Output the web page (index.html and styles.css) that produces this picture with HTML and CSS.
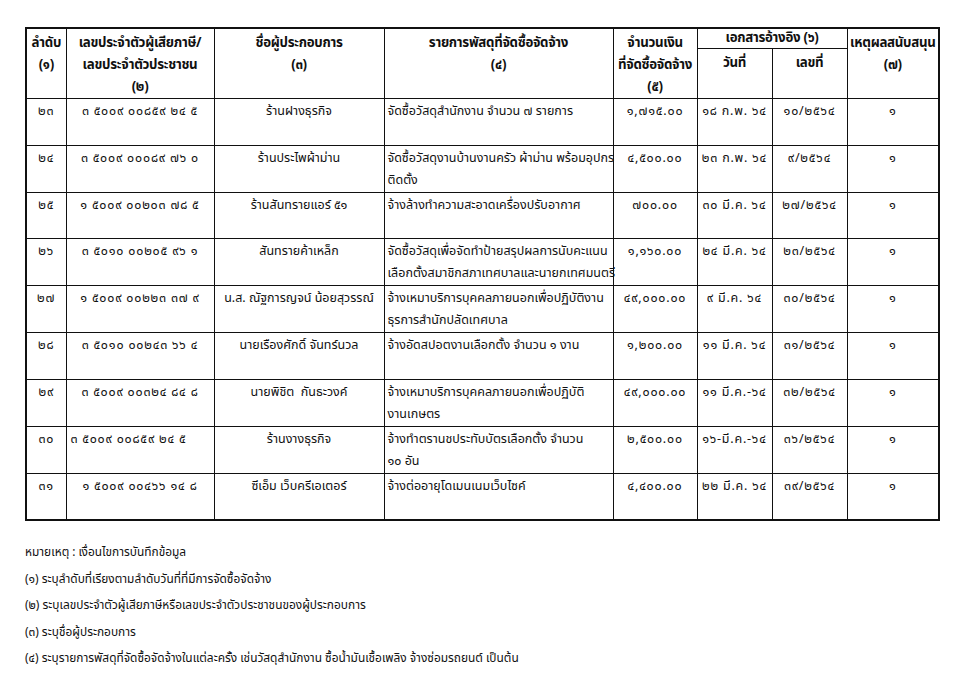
FILE: index.html
```html
<!DOCTYPE html>
<html lang="th">
<head>
<meta charset="utf-8">
<link rel="stylesheet" href="styles.css">
</head>
<body>
<div class="page">
<table class="proc">
<colgroup>
<col class="c1"><col class="c2"><col class="c3"><col class="c4"><col class="c5"><col class="c6"><col class="c7"><col class="c8">
</colgroup>
<thead>
<tr class="h1">
<th rowspan="2">ลำดับ<br>(๑)</th>
<th rowspan="2">เลขประจำตัวผู้เสียภาษี/<br>เลขประจำตัวประชาชน<br>(๒)</th>
<th rowspan="2">ชื่อผู้ประกอบการ<br>(๓)</th>
<th rowspan="2">รายการพัสดุที่จัดซื้อจัดจ้าง<br>(๔)</th>
<th rowspan="2">จำนวนเงิน<br>ที่จัดซื้อจัดจ้าง<br>(๕)</th>
<th colspan="2" class="ref">เอกสารอ้างอิง (๖)</th>
<th rowspan="2">เหตุผลสนับสนุน<br>(๗)</th>
</tr>
<tr class="h2">
<th>วันที่</th>
<th>เลขที่</th>
</tr>
</thead>
<tbody>
<tr>
<td>๒๓</td><td>๓ ๕๐๐๙ ๐๐๘๕๙ ๒๔ ๕</td><td>ร้านฝางธุรกิจ</td>
<td class="desc">จัดซื้อวัสดุสำนักงาน จำนวน ๗ รายการ</td>
<td>๑,๗๑๕.๐๐</td><td>๑๘ ก.พ. ๖๔</td><td>๑๐/๒๕๖๔</td><td>๑</td>
</tr>
<tr>
<td>๒๔</td><td>๓ ๕๐๐๙ ๐๐๐๘๙ ๗๖ ๐</td><td>ร้านประไพผ้าม่าน</td>
<td class="desc">จัดซื้อวัสดุงานบ้านงานครัว ผ้าม่าน พร้อมอุปกร<br>ติดตั้ง</td>
<td>๔,๕๐๐.๐๐</td><td>๒๓ ก.พ. ๖๔</td><td>๙/๒๕๖๔</td><td>๑</td>
</tr>
<tr>
<td>๒๕</td><td>๑ ๕๐๐๙ ๐๐๒๐๓ ๗๘ ๕</td><td>ร้านสันทรายแอร์ ๕๑</td>
<td class="desc">จ้างล้างทำความสะอาดเครื่องปรับอากาศ</td>
<td>๗๐๐.๐๐</td><td>๓๐ มี.ค. ๖๔</td><td>๒๗/๒๕๖๔</td><td>๑</td>
</tr>
<tr>
<td>๒๖</td><td>๓ ๕๐๑๐ ๐๐๒๐๕ ๙๖ ๑</td><td>สันทรายค้าเหล็ก</td>
<td class="desc">จัดซื้อวัสดุเพื่อจัดทำป้ายสรุปผลการนับคะแนน<br>เลือกตั้งสมาชิกสภาเทศบาลและนายกเทศมนตรี</td>
<td>๑,๑๖๐.๐๐</td><td>๒๔ มี.ค. ๖๔</td><td>๒๓/๒๕๖๔</td><td>๑</td>
</tr>
<tr>
<td>๒๗</td><td>๑ ๕๐๐๙ ๐๐๒๒๓ ๓๗ ๙</td><td>น.ส. ณัฐการญจน์ น้อยสุวรรณ์</td>
<td class="desc">จ้างเหมาบริการบุคคลภายนอกเพื่อปฏิบัติงาน<br>ธุรการสำนักปลัดเทศบาล</td>
<td>๔๙,๐๐๐.๐๐</td><td>๙ มี.ค. ๖๔</td><td>๓๐/๒๕๖๔</td><td>๑</td>
</tr>
<tr>
<td>๒๘</td><td>๓ ๕๐๑๐ ๐๐๒๔๓ ๖๖ ๔</td><td>นายเรืองศักดิ์ จันทร์นวล</td>
<td class="desc">จ้างอัดสปอตงานเลือกตั้ง จำนวน ๑ งาน</td>
<td>๑,๒๐๐.๐๐</td><td>๑๑ มี.ค. ๖๔</td><td>๓๑/๒๕๖๔</td><td>๑</td>
</tr>
<tr>
<td>๒๙</td><td>๓ ๕๐๐๙ ๐๐๓๒๔ ๘๔ ๘</td><td>นายพิชิต&nbsp; กันธะวงค์</td>
<td class="desc">จ้างเหมาบริการบุคคลภายนอกเพื่อปฏิบัติ<br>งานเกษตร</td>
<td>๔๙,๐๐๐.๐๐</td><td>๑๑ มี.ค.-๖๔</td><td>๓๒/๒๕๖๔</td><td>๑</td>
</tr>
<tr>
<td>๓๐</td><td class="left">๓ ๕๐๐๙ ๐๐๘๕๙ ๒๔ ๕</td><td>ร้านงางธุรกิจ</td>
<td class="desc">จ้างทำตรานชประทับบัตรเลือกตั้ง จำนวน<br>๑๐ อัน</td>
<td>๒,๕๐๐.๐๐</td><td>๑๖-มี.ค.-๖๔</td><td>๓๖/๒๕๖๔</td><td>๑</td>
</tr>
<tr>
<td>๓๑</td><td>๑ ๕๐๐๙ ๐๐๔๖๖ ๑๔ ๘</td><td>ซีเอ็ม เว็บครีเอเตอร์</td>
<td class="desc">จ้างต่ออายุโดเมนเนมเว็บไซค์</td>
<td>๔,๔๐๐.๐๐</td><td>๒๒ มี.ค. ๖๔</td><td>๓๙/๒๕๖๔</td><td>๑</td>
</tr>
</tbody>
</table>
<div class="notes">
<p>หมายเหตุ : เงื่อนไขการบันทึกข้อมูล</p>
<p>(๑) ระบุลำดับที่เรียงตามลำดับวันที่ที่มีการจัดซื้อจัดจ้าง</p>
<p>(๒) ระบุเลขประจำตัวผู้เสียภาษีหรือเลขประจำตัวประชาชนของผู้ประกอบการ</p>
<p>(๓) ระบุชื่อผู้ประกอบการ</p>
<p>(๔) ระบุรายการพัสดุที่จัดซื้อจัดจ้างในแต่ละครั้ง เช่นวัสดุสำนักงาน ซื้อน้ำมันเชื้อเพลิง จ้างซ่อมรถยนต์ เป็นต้น</p>
</div>
</div>
</body>
</html>
```

FILE: styles.css
```css
html, body {
  margin: 0;
  padding: 0;
  background: #ffffff;
}
body {
  font-family: "Noto Sans Thai", "Noto Sans", "DejaVu Sans", sans-serif;
  color: #111111;
}
.page {
  padding: 27px 0 0 25px;
}
.proc {
  border-collapse: collapse;
  table-layout: fixed;
  width: 913px;
  border: 2px solid #111;
}
.c1 { width: 40px; }
.c2 { width: 148px; }
.c3 { width: 170px; }
.c4 { width: 229px; }
.c5 { width: 84px; }
.c6 { width: 75px; }
.c7 { width: 75px; }
.c8 { width: 92px; }
.proc th, .proc td {
  border: 1.5px solid #111;
  vertical-align: top;
  text-align: center;
  white-space: nowrap;
  overflow: visible;
}
.proc th {
  font-weight: bold;
  font-size: 13.3px;
  letter-spacing: -0.3px;
  line-height: 22px;
  padding: 3px 1px 0;
}
.proc .h1 .ref {
  height: 19px;
  line-height: 19px;
  padding: 0 1px;
}
.proc .h2 th {
  height: 46px;
  padding-top: 3px;
}
.proc td {
  height: 43.5px;
  padding: 2px 2px 0;
  line-height: 22px;
  font-size: 12.5px;
}
.proc td:nth-child(1),
.proc td:nth-child(2),
.proc td:nth-child(5),
.proc td:nth-child(6),
.proc td:nth-child(7),
.proc td:nth-child(8) {
  letter-spacing: 0.8px;
}
.proc td.desc { text-align: left; padding-left: 3px; }
.proc td.left { text-align: left; padding-left: 4px; }
.notes {
  margin-top: 18px;
  font-size: 11.9px;
}
.notes p {
  margin: 0;
  line-height: 26.5px;
}
```
